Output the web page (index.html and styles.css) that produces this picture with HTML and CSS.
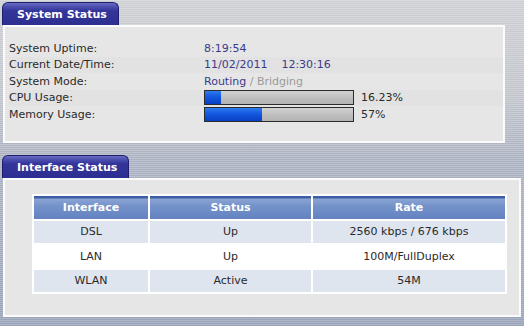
FILE: index.html
```html
<!DOCTYPE html>
<html>
<head>
<meta charset="utf-8">
<link rel="stylesheet" href="styles.css">
</head>
<body>
<section class="block">
  <div class="tab tab-sys">System Status</div>
  <div class="panel panel-sys">
    <div class="row"><span class="label">System Uptime:</span><span class="val">8:19:54</span></div>
    <div class="row alt"><span class="label">Current Date/Time:</span><span class="val">11/02/2011</span><span class="val time">12:30:16</span></div>
    <div class="row"><span class="label">System Mode:</span><span class="val">Routing</span><span class="dim">&nbsp;/ Bridging</span></div>
    <div class="row alt"><span class="label">CPU Usage:</span><span class="bar"><span class="fill" style="width:16px"></span></span><span class="pct">16.23%</span></div>
    <div class="row"><span class="label">Memory Usage:</span><span class="bar"><span class="fill" style="width:57px"></span></span><span class="pct">57%</span></div>
  </div>
</section>
<section class="block block-if">
  <div class="tab tab-if">Interface Status</div>
  <div class="panel panel-if">
    <table class="iftable">
      <thead>
        <tr><th class="c1">Interface</th><th class="c2">Status</th><th class="c3">Rate</th></tr>
      </thead>
      <tbody>
        <tr class="shade"><td>DSL</td><td>Up</td><td>2560 kbps / 676 kbps</td></tr>
        <tr><td>LAN</td><td>Up</td><td>100M/FullDuplex</td></tr>
        <tr class="shade"><td>WLAN</td><td>Active</td><td>54M</td></tr>
      </tbody>
    </table>
  </div>
</section>
</body>
</html>
```
FILE: styles.css
```css
html, body {
  margin: 0;
  padding: 0;
}
body {
  width: 524px;
  height: 326px;
  overflow: hidden;
  padding-top: 2px;
  box-sizing: border-box;
  font-family: "DejaVu Sans", Verdana, sans-serif;
  font-size: 11px;
  color: #2a2a2a;
  background:
    repeating-linear-gradient(to bottom, rgba(255,255,255,0.16) 0 1px, rgba(0,0,0,0.03) 1px 2px),
    linear-gradient(to bottom, #d2d4d9 0%, #c6c9d0 30%, #b0b7c6 50%, #a9b1c3 75%, #9ea8be 100%);
}
.block {
  display: flex;
  flex-direction: column;
  align-items: flex-start;
}
.block-if {
  margin-top: 12px;
}
.tab {
  margin-left: 2px;
  height: 23px;
  box-sizing: border-box;
  border: 1px solid #1d1f6e;
  border-bottom: none;
  border-radius: 6px 6px 0 0;
  background: linear-gradient(to bottom, #6a6cc0 0%, #4a4cae 18%, #33359a 35%, #2c2e90 100%);
  color: #fff;
  font-weight: bold;
  font-size: 11px;
  line-height: 20px;
  padding-top: 2px;
  padding-left: 14px;
}
.tab-sys { width: 117px; }
.tab-if { width: 127px; }
.panel {
  margin-left: 3px;
  box-sizing: border-box;
  border: 2px solid #fbfbfb;
  background: #e6e6e6;
}
.panel-sys {
  width: 502px;
  height: 118px;
  padding: 13px 0 0 4px;
}
.row {
  display: flex;
  align-items: center;
  height: 16.5px;
}
.row.alt {
  background: #e2e2e2;
}
.label {
  width: 195px;
  flex: none;
}
.val {
  color: #3a3a8c;
}
.time {
  margin-left: 14px;
}
.dim {
  color: #9a9a9a;
}
.bar {
  width: 150px;
  height: 15px;
  box-sizing: border-box;
  border: 1px solid #2b2b2b;
  background: linear-gradient(to bottom, #d2d2d2, #bcbcbc 60%, #b4b4b4);
  display: flex;
  flex: none;
}
.fill {
  display: block;
  height: 100%;
  background: linear-gradient(to bottom, #2f7af0 0%, #1358e0 45%, #0a3fc4 100%);
}
.pct {
  margin-left: 7px;
}
.panel-if {
  width: 518px;
  height: 139px;
  padding: 14px 12px 0 27px;
}
.iftable {
  width: 475px;
  border-collapse: separate;
  border-spacing: 2px;
  background: #fff;
  font-size: 11px;
}
.iftable th, .iftable td {
  height: 22.5px;
  padding: 0;
  text-align: center;
  vertical-align: middle;
}
.iftable th {
  color: #fff;
  font-weight: bold;
  background: linear-gradient(to bottom, #3e5fa6 0px, #3e5fa6 2px, #8aa3d3 3px, #7391c9 45%, #6482c0 100%);
}
.c1 { width: 114px; }
.c2 { width: 161px; }
.c3 { width: 192px; }
.iftable td {
  color: #2a2a2a;
  background: #fff;
}
.iftable tr.shade td {
  background: #dee5ef;
}
```
